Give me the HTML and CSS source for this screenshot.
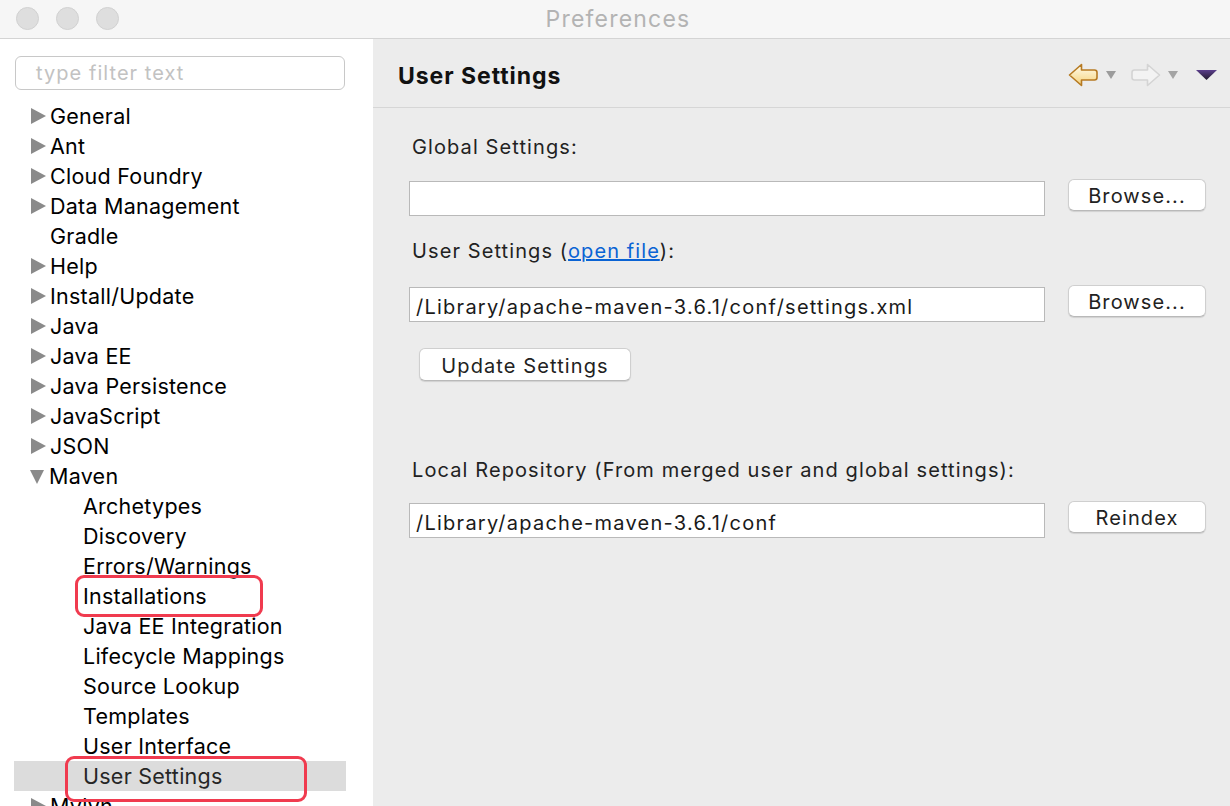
FILE: index.html
```html
<!DOCTYPE html>
<html>
<head>
<meta charset="utf-8">
<title>Preferences</title>
<link rel="stylesheet" href="styles.css">
</head>
<body>
<div class="window">
  <header class="titlebar">
    <div class="lights">
      <span class="light"></span><span class="light"></span><span class="light"></span>
    </div>
    <div class="title">Preferences</div>
    <div></div>
  </header>
  <div class="main">
    <aside class="sidebar">
      <div class="filter"><span class="placeholder">type filter text</span></div>
      <ul class="tree">
        <li class="row"><span class="tri"></span>General</li>
        <li class="row"><span class="tri"></span>Ant</li>
        <li class="row"><span class="tri"></span>Cloud Foundry</li>
        <li class="row"><span class="tri"></span>Data Management</li>
        <li class="row leaf">Gradle</li>
        <li class="row"><span class="tri"></span>Help</li>
        <li class="row"><span class="tri"></span>Install/Update</li>
        <li class="row"><span class="tri"></span>Java</li>
        <li class="row"><span class="tri"></span>Java EE</li>
        <li class="row"><span class="tri"></span>Java Persistence</li>
        <li class="row"><span class="tri"></span>JavaScript</li>
        <li class="row"><span class="tri"></span>JSON</li>
        <li class="row"><span class="tri open"></span>Maven</li>
        <li class="row child">Archetypes</li>
        <li class="row child">Discovery</li>
        <li class="row child">Errors/Warnings</li>
        <li class="row child">Installations</li>
        <li class="row child">Java EE Integration</li>
        <li class="row child">Lifecycle Mappings</li>
        <li class="row child">Source Lookup</li>
        <li class="row child">Templates</li>
        <li class="row child">User Interface</li>
        <li class="row child selected">User Settings</li>
        <li class="row"><span class="tri"></span>Mylyn</li>
      </ul>
      <div class="mark mark-install"></div>
      <div class="mark mark-user"></div>
    </aside>
    <section class="page">
      <div class="page-head">
        <h1 class="page-title">User Settings</h1>
        <div class="nav">
          <svg class="arrow" width="31" height="24" viewBox="0 0 31 24">
            <defs>
              <linearGradient id="gb" x1="0" y1="0" x2="0" y2="1">
                <stop offset="0" stop-color="#fffdf0"/>
                <stop offset="1" stop-color="#f6d27a"/>
              </linearGradient>
            </defs>
            <path d="M1.5 12 L13.5 1.5 L13.5 7 L26.5 7 Q29 7 29 9.5 L29 14.5 Q29 17 26.5 17 L13.5 17 L13.5 22.5 Z" fill="url(#gb)" stroke="#b67a22" stroke-width="1.6" stroke-linejoin="round"/>
          </svg>
          <svg class="drop" width="10" height="8" viewBox="0 0 10 8"><polygon points="0,0 10,0 5,8" fill="#9c9c9c"/></svg>
          <svg class="arrow fwd" width="31" height="24" viewBox="0 0 31 24">
            <path d="M29.5 12 L17.5 1.5 L17.5 7 L4.5 7 Q2 7 2 9.5 L2 14.5 Q2 17 4.5 17 L17.5 17 L17.5 22.5 Z" fill="#f3f3f3" stroke="#d4d4d4" stroke-width="1.6" stroke-linejoin="round"/>
          </svg>
          <svg class="drop" width="10" height="8" viewBox="0 0 10 8"><polygon points="0,0 10,0 5,8" fill="#a4a4a4"/></svg>
          <svg class="menu" width="21" height="10" viewBox="0 0 21 10">
            <defs>
              <linearGradient id="gp" x1="0" y1="0" x2="0" y2="1">
                <stop offset="0" stop-color="#5b3e8c"/>
                <stop offset="1" stop-color="#221a2c"/>
              </linearGradient>
            </defs>
            <polygon points="0,0 21,0 10.5,10" fill="url(#gp)"/>
          </svg>
        </div>
      </div>
      <div class="page-body">
        <div class="label">Global Settings:</div>
        <div class="field-row">
          <div class="input"></div>
          <div class="button">Browse...</div>
        </div>
        <div class="label label-user">User Settings (<span class="link">open file</span>):</div>
        <div class="field-row field-row-user">
          <div class="input">/Library/apache-maven-3.6.1/conf/settings.xml</div>
          <div class="button">Browse...</div>
        </div>
        <div class="button button-update">Update Settings</div>
        <div class="label label-local">Local Repository (From merged user and global settings):</div>
        <div class="field-row field-row-local">
          <div class="input">/Library/apache-maven-3.6.1/conf</div>
          <div class="button">Reindex</div>
        </div>
      </div>
    </section>
  </div>
</div>
</body>
</html>
```

FILE: styles.css
```css
* { box-sizing: border-box; }
html, body {
  margin: 0;
  padding: 0;
}
body {
  width: 1230px;
  height: 806px;
  overflow: hidden;
  font-family: Inter, "Liberation Sans", Arial, sans-serif;
  background: #ececec;
}
.window {
  width: 1230px;
  height: 806px;
  display: flex;
  flex-direction: column;
  overflow: hidden;
}

/* title bar */
.titlebar {
  height: 39px;
  flex: 0 0 39px;
  background: #f6f6f6;
  border-bottom: 1px solid #d4d4d4;
  display: grid;
  grid-template-columns: 1fr auto 1fr;
  align-items: center;
}
.lights {
  display: flex;
  gap: 17px;
  padding-left: 16px;
  padding-bottom: 1px;
}
.light {
  width: 23px;
  height: 23px;
  border-radius: 50%;
  background: #dedede;
  border: 1px solid #d1d1d1;
}
.title {
  font-size: 23px;
  letter-spacing: 1.2px;
  color: #b3b3b3;
  padding-left: 6px;
  padding-bottom: 1px;
}

.main {
  flex: 1;
  display: flex;
  min-height: 0;
}

/* sidebar */
.sidebar {
  position: relative;
  width: 373px;
  flex: 0 0 373px;
  background: #ffffff;
  overflow: hidden;
}
.filter {
  margin: 17px 0 0 15px;
  width: 330px;
  height: 34px;
  border: 1px solid #c8c8c8;
  border-radius: 6px;
  display: flex;
  align-items: center;
  padding-left: 20px;
}
.placeholder {
  font-size: 20px;
  letter-spacing: 1.05px;
  color: #c2c2c2;
}
.tree {
  list-style: none;
  margin: 11px 0 0 14px;
  padding: 0;
  width: 332px;
}
.row {
  height: 30px;
  line-height: 30px;
  font-size: 21.5px;
  letter-spacing: 0.25px;
  color: #000;
  display: flex;
  align-items: center;
  padding-left: 17px;
  white-space: nowrap;
}
.row.leaf { padding-left: 36px; }
.row.child { padding-left: 69px; }
.row.selected {
  background: #dcdcdc;
  color: #262626;
}
.tri {
  width: 0;
  height: 0;
  border-left: 15px solid #8a8a8a;
  border-top: 8px solid transparent;
  border-bottom: 8px solid transparent;
  margin-right: 4px;
  margin-top: -1px;
}
.tri.open {
  border-left: 7.5px solid transparent;
  border-right: 7.5px solid transparent;
  border-top: 14px solid #8a8a8a;
  border-bottom: 0;
  margin-left: -1px;
  margin-right: 5px;
  margin-top: 1px;
}

/* annotation boxes */
.mark {
  position: absolute;
  border: 3px solid #f03b4f;
  border-radius: 9px;
}
.mark-install {
  left: 75px;
  top: 536px;
  width: 188px;
  height: 42px;
}
.mark-user {
  left: 65px;
  top: 717px;
  width: 242px;
  height: 46px;
}

/* right page */
.page {
  flex: 1;
  background: #ececec;
  display: flex;
  flex-direction: column;
}
.page-head {
  height: 69px;
  flex: 0 0 69px;
  border-bottom: 1px solid #d6d6d6;
  display: flex;
  align-items: center;
  justify-content: space-between;
  padding: 5px 13px 0 25px;
}
.page-title {
  margin: 0;
  font-size: 23px;
  font-weight: bold;
  letter-spacing: 0.95px;
  color: #111;
}
.nav {
  display: flex;
  align-items: center;
  margin-top: -2px;
}
.nav svg { display: block; }
.nav .drop { margin-left: 7px; }
.nav .fwd { margin-left: 14px; }
.nav .menu { margin-left: 18px; }

.page-body {
  padding: 27px 24px 0 36px;
  display: flex;
  flex-direction: column;
  align-items: flex-start;
  font-size: 20px;
  letter-spacing: 1.1px;
  color: #222;
}
.label {
  height: 24px;
  line-height: 24px;
  padding-left: 3px;
  white-space: nowrap;
}
.link {
  color: #0a63d4;
  text-decoration: underline;
}
.label-user { margin-top: 23px; }
.label-local { margin-top: 77px; }

.field-row {
  width: 100%;
  display: grid;
  grid-template-columns: 1fr 138px;
  column-gap: 23px;
  align-items: start;
  margin-top: 20px;
}
.field-row-user { margin-top: 22px; }
.field-row-local { margin-top: 19px; }
.input {
  margin-top: 2px;
  height: 35px;
  background: #fff;
  border: 1px solid #b9b9b9;
  padding: 3px 0 0 6px;
  line-height: 33px;
  letter-spacing: 1.25px;
  white-space: nowrap;
  overflow: hidden;
  color: #1a1a1a;
}
.button {
  height: 32px;
  background: #fff;
  border: 1px solid #cfcfcf;
  border-bottom-color: #b9b9b9;
  border-radius: 6px;
  box-shadow: 0 1px 1px rgba(0,0,0,0.12);
  text-align: center;
  padding-top: 1px;
  line-height: 30px;
  color: #222;
  white-space: nowrap;
}
.button-update {
  margin-top: 26px;
  margin-left: 10px;
  width: 212px;
  height: 33px;
  padding-top: 2px;
  line-height: 31px;
}
```
